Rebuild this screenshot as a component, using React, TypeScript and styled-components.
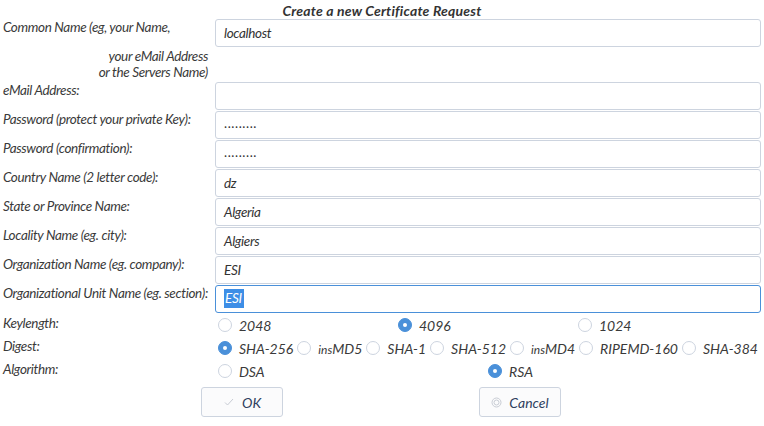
import React from "react";
import styled, { createGlobalStyle } from "styled-components";

const Global = createGlobalStyle`
  html, body { margin: 0; padding: 0; background: #ffffff; }
  * { box-sizing: border-box; }
`;

const LABEL_FONT = `"Lato", "Noto Sans", sans-serif`;
const RADIO_FONT = `"Lato", "Noto Sans", sans-serif`;

const Page = styled.div`
  width: 764px;
  height: 426px;
  background: #ffffff;
  color: #3a3a3a;
  font-family: ${LABEL_FONT};
  padding: 0 3px;
`;

const Title = styled.h1`
  margin: 0;
  height: 19px;
  line-height: 21px;
  text-align: center;
  font-size: 14px;
  font-weight: bold;
  font-style: italic;
  color: #333;
  letter-spacing: 0.2px;
`;

const Form = styled.div`
  display: grid;
  grid-template-columns: 209px 1fr;
  column-gap: 3px;
  row-gap: 1px;
`;

const Label = styled.div<{ $tall?: boolean }>`
  font-size: 13.5px;
  letter-spacing: -0.35px;
  font-style: italic;
  line-height: 16px;
  padding-top: 0;
  white-space: nowrap;
  height: ${(p) => (p.$tall ? "62px" : "28px")};
`;

const LabelNote = styled.div`
  text-align: right;
  margin-top: 13px;
  padding-right: 4px;
`;

const Field = styled.div<{ $focus?: boolean }>`
  align-self: start;
  height: 28px;
  border: 1px solid ${(p) => (p.$focus ? "#4a90d9" : "#cdd4df")};
  border-radius: 3px;
  background: #fff;
  padding: 0 8px;
  display: flex;
  align-items: center;
  font-size: 13.5px;
  letter-spacing: -0.35px;
  font-style: italic;
  color: #333;
  padding-bottom: 1px;
`;

const Selected = styled.span`
  background: #3d8ee6;
  color: #fff;
  padding: 1px 2px 1px 1px;
  line-height: 17px;
`;

const Dots = styled.span`
  letter-spacing: 0.6px;
  font-style: normal;
  font-size: 13px;
  position: relative;
  top: -2px;
`;

const RowLabel = styled.div`
  font-size: 13.5px;
  letter-spacing: -0.35px;
  font-style: italic;
  height: 22px;
  line-height: 16px;
  padding-top: 1px;
`;

const Options = styled.div<{ $cols?: number }>`
  height: 22px;
  display: ${(p) => (p.$cols ? "grid" : "flex")};
  grid-template-columns: ${(p) => (p.$cols ? `repeat(${p.$cols}, 1fr)` : "none")};
  justify-content: space-between;
  align-items: center;
  padding: 0 3px 0 3px;
`;

const Option = styled.label`
  display: flex;
  align-items: center;
  gap: 7px;
  font-family: ${RADIO_FONT};
  font-style: italic;
  font-size: 14px;
  color: #3a3a3a;
  white-space: nowrap;
`;

const Small = styled.span`
  font-size: 12px;
`;

const Radio = styled.span<{ $on?: boolean }>`
  width: 14px;
  height: 14px;
  border-radius: 50%;
  flex: none;
  border: 1px solid ${(p) => (p.$on ? "#4a90d9" : "#cdd4df")};
  background: ${(p) => (p.$on ? "#4a90d9" : "#fff")};
  display: flex;
  align-items: center;
  justify-content: center;
  &::after {
    content: "";
    display: ${(p) => (p.$on ? "block" : "none")};
    width: 4px;
    height: 4px;
    border-radius: 50%;
    background: #fff;
  }
`;

const ButtonBar = styled.div`
  display: flex;
  gap: 196px;
  margin-top: 4px;
  padding-left: 198px;
`;

const Button = styled.button`
  width: 82px;
  height: 30px;
  border: 1px solid #cdd4df;
  border-radius: 3px;
  background: #fbfbfc;
  display: flex;
  align-items: center;
  justify-content: center;
  gap: 7px;
  font-family: ${RADIO_FONT};
  font-style: italic;
  font-size: 14px;
  color: #2f3f5f;
  padding: 0;
`;

const Spacer = styled.div``;

const fields: { label: string; value?: string; password?: boolean }[] = [
  { label: "eMail Address:", value: "" },
  { label: "Password (protect your private Key):", password: true },
  { label: "Password (confirmation):", password: true },
  { label: "Country Name (2 letter code):", value: "dz" },
  { label: "State or Province Name:", value: "Algeria" },
  { label: "Locality Name (eg. city):", value: "Algiers" },
  { label: "Organization Name (eg. company):", value: "ESI" },
];

const Check = () => (
  <svg width="12" height="12" viewBox="0 0 12 12">
    <path d="M2 6.5 L4.5 9 L10 3" fill="none" stroke="#c8ccd4" strokeWidth="1" />
  </svg>
);

const CancelIcon = () => (
  <svg width="11" height="11" viewBox="0 0 11 11">
    <circle cx="5.5" cy="5.5" r="4.5" fill="none" stroke="#c8ccd4" strokeWidth="1" />
    <circle cx="5.5" cy="5.5" r="2.5" fill="none" stroke="#c8ccd4" strokeWidth="1" />
  </svg>
);

export default function App() {
  return (
    <Page>
      <Global />
      <Title>Create a new Certificate Request</Title>
      <Form>
        <Label $tall>
          Common Name (eg, your Name,
          <LabelNote>
            your eMail Address
            <br />
            or the Servers Name)
          </LabelNote>
        </Label>
        <Field>localhost</Field>
        {fields.map((f) => (
          <React.Fragment key={f.label}>
            <Label>{f.label}</Label>
            <Field>{f.password ? <Dots>.........</Dots> : f.value}</Field>
          </React.Fragment>
        ))}
        <Label>Organizational Unit Name (eg. section):</Label>
        <Field $focus>
          <Selected>ESI</Selected>
        </Field>

        <RowLabel>Keylength:</RowLabel>
        <Options $cols={3}>
          <Option><Radio />2048</Option>
          <Option><Radio $on />4096</Option>
          <Option><Radio />1024</Option>
        </Options>

        <RowLabel>Digest:</RowLabel>
        <Options>
          <Option><Radio $on />SHA-256</Option>
          <Option><Radio /><span><Small>ins</Small>MD5</span></Option>
          <Option><Radio />SHA-1</Option>
          <Option><Radio />SHA-512</Option>
          <Option><Radio /><span><Small>ins</Small>MD4</span></Option>
          <Option><Radio />RIPEMD-160</Option>
          <Option><Radio />SHA-384</Option>
        </Options>

        <RowLabel>Algorithm:</RowLabel>
        <Options $cols={2}>
          <Option><Radio />DSA</Option>
          <Option><Radio $on />RSA</Option>
        </Options>
        <Spacer />
      </Form>
      <ButtonBar>
        <Button><Check />OK</Button>
        <Button><CancelIcon />Cancel</Button>
      </ButtonBar>
    </Page>
  );
}
